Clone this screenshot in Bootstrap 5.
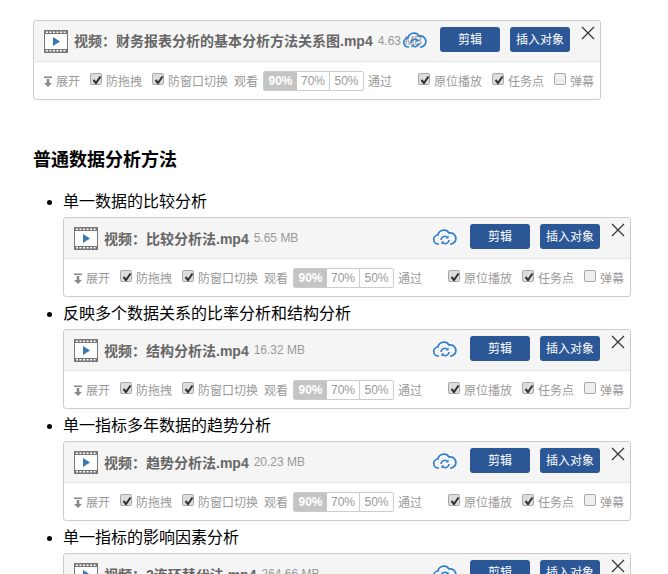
<!DOCTYPE html>
<html lang="zh"><head><meta charset="utf-8">
<link href="https://cdn.jsdelivr.net/npm/bootstrap@5.3.0/dist/css/bootstrap.min.css" rel="stylesheet">
<style>
html,body{height:574px;overflow:hidden;background:#fff}
body{font-family:"Liberation Sans","Noto Sans CJK SC",sans-serif;color:#000;padding:20px 37px 0 33px;font-size:16px}
.vcard{width:568px;height:80px;border:1px solid #ccc;border-radius:3px;position:relative;background:#fff}
.vhead{height:41px;background:#f5f5f5;border-bottom:1px solid #e6e6e6;padding:0 0 0 10px;border-radius:3px 3px 0 0}
.vname{font-weight:700;font-size:14px;color:#666;margin-left:6px;white-space:nowrap}
.vsize{font-size:12px;color:#999;margin-left:5px;white-space:nowrap}
.vcloud{position:absolute;left:369px;top:10px}
.vbtn{position:absolute;top:6px;height:25px;width:60px;padding:0;border-radius:3px;background:#2b5797;color:#fff;font-size:12px;line-height:27px;text-align:center}
.b1{left:406px}.b2{left:476px}
.vclose{position:absolute;left:547px;top:5px}
.vfoot{height:38px;font-size:12px;color:#999;white-space:nowrap;position:relative}
.opt{position:absolute;top:11px;line-height:18px}
.ck{display:inline-block;width:12px;height:12px;border:1px solid #aaa;border-radius:2px;background:#ddd;position:relative;top:-4px;margin-right:4px;vertical-align:middle}
.ck svg{position:absolute;left:1px;top:1px}
.ck.off{background:#eee}
.pct{position:absolute;top:9px;left:229px;display:flex;height:20px;border:1px solid #ccc;border-radius:2px;font-size:12px;line-height:18px;color:#999}
.pct span{width:33px;text-align:center;border-right:1px solid #ccc}
.pct span:first-child{background:#c4c4c4;color:#fff;font-weight:700;border:0}
.pct span:last-child{border:0}
h1.ttl{font-size:18px;font-weight:700;line-height:24px;margin:48px 0 13px;color:#000}
ul.lst{margin:0;padding:0 0 0 30px;list-style:disc}
ul.lst li{line-height:34px;font-size:16px;margin-bottom:0}
ul.lst li .vcard{line-height:normal;margin-top:-2px}
</style></head><body>
<svg width="0" height="0" class="d-block position-absolute"><defs>
<symbol id="film" viewBox="0 0 24 23"><rect x=".5" y=".5" width="23" height="22" fill="#fff" stroke="#777"/><rect x="0" y="0" width="24" height="4" fill="#777"/><rect x="0" y="19" width="24" height="4" fill="#777"/><path d="M2 1.500h2v1.500H2zM5.500 1.500h2v1.500h-2zM9 1.500h2v1.500H9zM12.500 1.500h2v1.500h-2zM16 1.500h2v1.500h-2zM19.500 1.500h2v1.500h-2zM2 20h2v1.500H2zM5.500 20h2v1.500h-2zM9 20h2v1.500H9zM12.500 20h2v1.500h-2zM16 20h2v1.500h-2zM19.500 20h2v1.500h-2z" fill="#fff"/><path d="M9 7v9l7-4.500z" fill="#3a78b5"/></symbol>
<symbol id="cloud" viewBox="0 0 24 18"><path d="M6 16H5.500a4.500 4.500 0 0 1-.5-9A6 6 0 0 1 16 5a5.500 5.500 0 0 1 2.500 11H17" fill="none" stroke="#2a7fd0" stroke-width="1.700"/><path d="M8 12a4 4 0 0 1 7-2.300M16 12a4 4 0 0 1-7 2.300" fill="none" stroke="#2a7fd0" stroke-width="1.500"/><path d="M15.500 7.500v3h-3zM8.500 16.500v-3h3z" fill="#2a7fd0"/></symbol>
<symbol id="x" viewBox="0 0 14 14"><path d="M1 1l12 12M13 1L1 13" stroke="#333" stroke-width="1.200" fill="none"/></symbol>
<symbol id="chk" viewBox="0 0 10 10"><path d="M1.500 5l2.500 3 4.500-6.500" stroke="#333" stroke-width="2" fill="none"/></symbol>
<symbol id="down" viewBox="0 0 8 11"><path d="M0 .5h8v1.500H0zM2.700 3h2.600v4H8l-4 4-4-4h2.700z" fill="#888"/></symbol>
</defs></svg>

<div class="vcard" id="top"></div>
<h1 class="ttl">普通数据分析方法</h1>
<ul class="lst">
<li>单一数据的比较分析<div class="vcard" data-n="比较分析法.mp4" data-s="5.65 MB"></div></li>
<li>反映多个数据关系的比率分析和结构分析<div class="vcard" data-n="结构分析法.mp4" data-s="16.32 MB"></div></li>
<li>单一指标多年数据的趋势分析<div class="vcard" data-n="趋势分析法.mp4" data-s="20.23 MB"></div></li>
<li>单一指标的影响因素分析<div class="vcard" data-n="2连环替代法.mp4" data-s="264.66 MB"></div></li>
</ul>
<script>
const t=document.getElementById('top');t.dataset.n='财务报表分析的基本分析方法关系图.mp4';t.dataset.s='4.63 MB';
const c=(x,on,l)=>`<span class="opt" style="left:${x}px"><span class="ck ${on?'':'off'}">${on?'<svg width="10" height="10"><use href="#chk"/></svg>':''}</span>${l}</span>`;
document.querySelectorAll('.vcard').forEach(e=>{e.innerHTML=`
<div class="vhead d-flex align-items-center"><svg width="24" height="23"><use href="#film"/></svg><span class="vname">视频：${e.dataset.n}</span><span class="vsize">${e.dataset.s}</span></div>
<svg class="vcloud" width="24" height="18"><use href="#cloud"/></svg>
<div class="vbtn b1">剪辑</div><div class="vbtn b2">插入对象</div>
<svg class="vclose" width="14" height="14"><use href="#x"/></svg>
<div class="vfoot"><svg class="opt" style="left:10px;top:14px" width="8" height="11"><use href="#down"/></svg><span class="opt" style="left:22px">展开</span>${c(56,1,'防拖拽')}${c(118,1,'防窗口切换')}<span class="opt" style="left:200px">观看</span><div class="pct"><span>90%</span><span>70%</span><span>50%</span></div><span class="opt" style="left:334px">通过</span>${c(384,1,'原位播放')}${c(458,1,'任务点')}${c(520,0,'弹幕')}</div>`});
</script>
</body></html>
